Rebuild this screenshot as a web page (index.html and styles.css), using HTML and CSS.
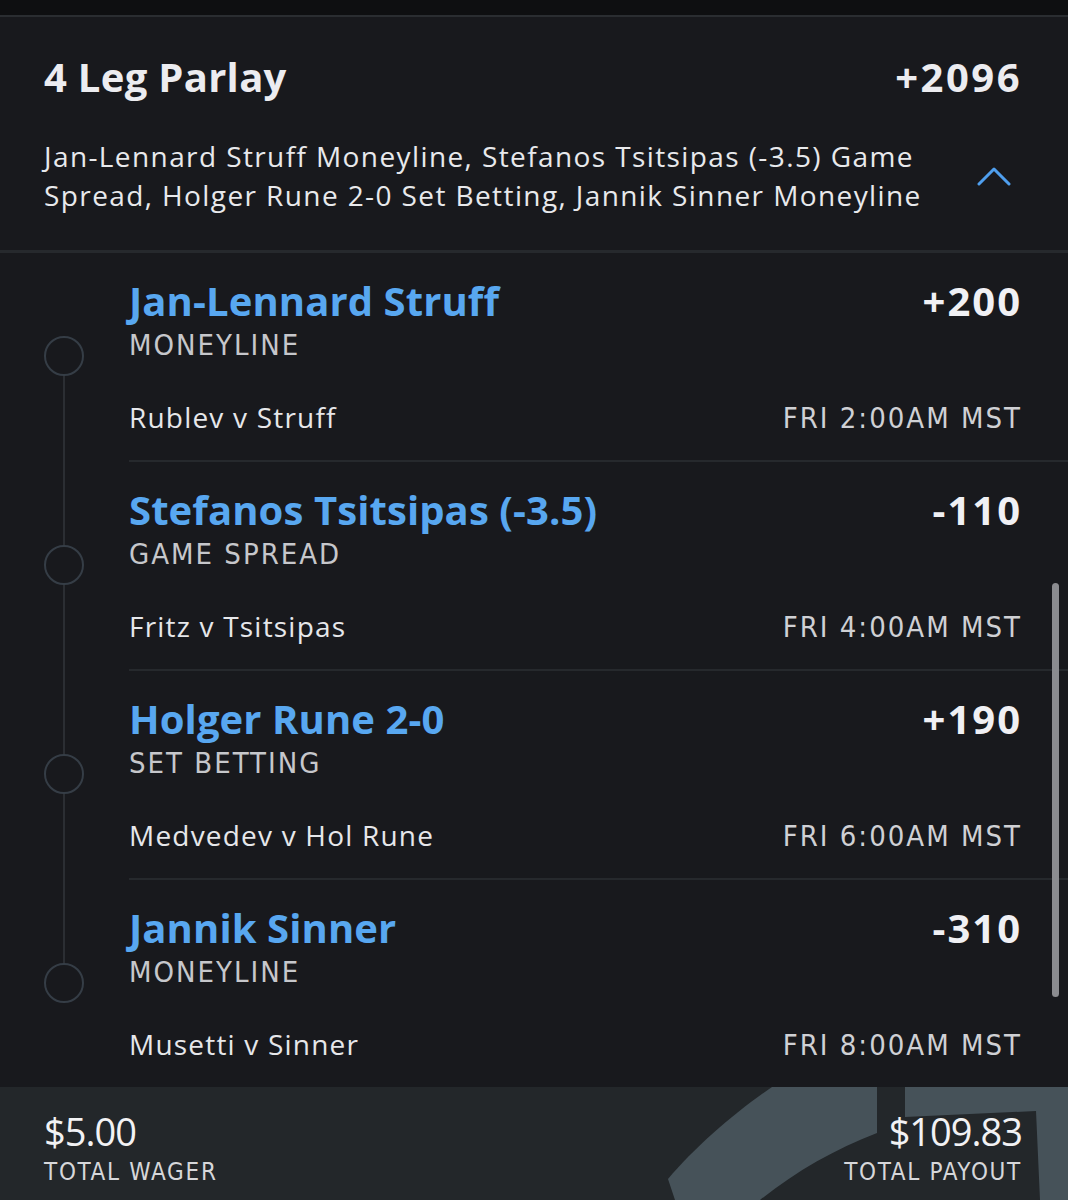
FILE: index.html
```html
<!DOCTYPE html>
<html lang="en">
<head>
<meta charset="utf-8">
<title>4 Leg Parlay</title>
<link rel="stylesheet" href="styles.css">
</head>
<body>
<div class="topbar"></div>
<header class="header">
  <div class="head-row">
    <h1 class="title">4 Leg Parlay</h1>
    <span class="total-odds">+2096</span>
  </div>
  <div class="desc-row">
    <p class="desc">Jan-Lennard Struff Moneyline, Stefanos Tsitsipas (-3.5) Game Spread, Holger Rune 2-0 Set Betting, Jannik Sinner Moneyline</p>
    <svg class="chevron" width="34" height="20" viewBox="0 0 34 20"><polyline points="2,18 17,3 32,18" fill="none" stroke="#4f9fee" stroke-width="3" stroke-linecap="round" stroke-linejoin="round"/></svg>
  </div>
</header>
<main class="legs">
  <section class="leg first">
    <div class="rail"><span class="seg top"></span><span class="dot"></span><span class="seg bottom"></span></div>
    <div class="leg-body">
      <div class="row"><span class="pick">Jan-Lennard Struff</span><span class="odds">+200</span></div>
      <div class="market">MONEYLINE</div>
      <div class="row match-row"><span class="match">Rublev v Struff</span><span class="time">FRI 2:00AM MST</span></div>
    </div>
  </section>
  <section class="leg">
    <div class="rail"><span class="seg top"></span><span class="dot"></span><span class="seg bottom"></span></div>
    <div class="leg-body">
      <div class="row"><span class="pick">Stefanos Tsitsipas (-3.5)</span><span class="odds">-110</span></div>
      <div class="market">GAME SPREAD</div>
      <div class="row match-row"><span class="match">Fritz v Tsitsipas</span><span class="time">FRI 4:00AM MST</span></div>
    </div>
  </section>
  <section class="leg">
    <div class="rail"><span class="seg top"></span><span class="dot"></span><span class="seg bottom"></span></div>
    <div class="leg-body">
      <div class="row"><span class="pick">Holger Rune 2-0</span><span class="odds">+190</span></div>
      <div class="market">SET BETTING</div>
      <div class="row match-row"><span class="match">Medvedev v Hol Rune</span><span class="time">FRI 6:00AM MST</span></div>
    </div>
  </section>
  <section class="leg last">
    <div class="rail"><span class="seg top"></span><span class="dot"></span><span class="seg bottom"></span></div>
    <div class="leg-body">
      <div class="row"><span class="pick">Jannik Sinner</span><span class="odds">-310</span></div>
      <div class="market">MONEYLINE</div>
      <div class="row match-row"><span class="match">Musetti v Sinner</span><span class="time">FRI 8:00AM MST</span></div>
    </div>
  </section>
  <div class="scrollbar"></div>
</main>
<footer class="footer">
  <svg class="crown" viewBox="0 0 1068 113" preserveAspectRatio="none">
    <path d="M772,0 C735,25 695,60 668,92 L675,113 L1068,113 L1068,0 Z" fill="#465259"/>
    <path d="M877,0 L905,0 L905,30 L1036,24 L1040,113 L760,113 C795,85 835,62 877,46 Z" fill="#23272a"/>
  </svg>
  <div class="amount">
    <span class="money">$5.00</span>
    <span class="label">TOTAL WAGER</span>
  </div>
  <div class="amount right">
    <span class="money">$109.83</span>
    <span class="label">TOTAL PAYOUT</span>
  </div>
</footer>
</body>
</html>
```
FILE: styles.css
```css
html, body {
  margin: 0;
  padding: 0;
}
body {
  width: 1068px;
  height: 1200px;
  overflow: hidden;
  background: #18191d;
  font-family: "Open Sans", "Liberation Sans", sans-serif;
  color: #e8e9ec;
}
.topbar {
  height: 15px;
  background: #0e0f11;
  border-bottom: 2px solid #2a2d31;
}
.header {
  padding: 36px 46px 35px 44px;
  border-bottom: 3px solid #26292d;
}
.head-row {
  display: flex;
  justify-content: space-between;
  align-items: baseline;
}
.title {
  margin: 0;
  font-size: 40px;
  line-height: 48px;
  font-weight: 700;
  color: #ececf0;
  letter-spacing: 0.3px;
}
.total-odds {
  font-size: 40px;
  line-height: 48px;
  font-weight: 700;
  color: #ececf0;
  letter-spacing: 2.5px;
}
.desc-row {
  display: flex;
  align-items: center;
  margin-top: 36px;
}
.desc {
  margin: 0;
  width: 912px;
  font-size: 28px;
  line-height: 39px;
  letter-spacing: 1.4px;
  color: #e8e9ec;
}
.chevron {
  margin-left: auto;
  margin-right: 11px;
  flex: none;
}
.legs {
  position: relative;
}
.leg {
  display: grid;
  grid-template-columns: 129px 1fr;
}
.rail {
  display: flex;
  flex-direction: column;
  align-items: flex-start;
}
.seg {
  display: block;
  width: 2px;
  margin-left: 63px;
  background: #2b2e33;
}
.seg.top {
  height: 83px;
}
.seg.bottom {
  flex: 1;
}
.first .seg.top,
.last .seg.bottom {
  background: transparent;
}
.dot {
  display: block;
  box-sizing: border-box;
  width: 40px;
  height: 40px;
  margin-left: 44px;
  border: 2px solid #353d46;
  border-radius: 50%;
}
.leg-body {
  padding: 24px 46px 22px 0;
  border-bottom: 2px solid #26292d;
}
.last .leg-body {
  border-bottom: none;
}
.row {
  display: flex;
  justify-content: space-between;
  align-items: baseline;
}
.pick {
  font-size: 40px;
  line-height: 48px;
  font-weight: 700;
  color: #58a7f0;
  letter-spacing: 0.1px;
}
.odds {
  font-size: 40px;
  line-height: 48px;
  font-weight: 700;
  color: #f0f0f4;
  letter-spacing: 2px;
}
.market {
  margin-top: 3px;
  font-family: "DejaVu Sans", "Liberation Sans", sans-serif;
  font-stretch: condensed;
  font-size: 29px;
  line-height: 34px;
  letter-spacing: 2px;
  color: #c6c7cb;
}
.match-row {
  margin-top: 36px;
}
.match {
  font-size: 28px;
  line-height: 39px;
  letter-spacing: 1.2px;
  color: #e6e7ea;
}
.time {
  font-family: "DejaVu Sans", "Liberation Sans", sans-serif;
  font-stretch: condensed;
  font-size: 29px;
  line-height: 39px;
  letter-spacing: 2px;
  color: #cfd0d4;
}
.scrollbar {
  position: absolute;
  top: 330px;
  right: 9px;
  width: 7px;
  height: 414px;
  border-radius: 4px;
  background: #8b8c90;
}
.footer {
  position: relative;
  height: 113px;
  box-sizing: border-box;
  padding: 22px 46px 0 44px;
  background: #23272a;
  display: flex;
  justify-content: space-between;
  align-items: flex-start;
}
.crown {
  position: absolute;
  left: 0;
  top: 0;
  width: 1068px;
  height: 113px;
}
.amount {
  position: relative;
  display: flex;
  flex-direction: column;
  align-items: flex-start;
}
.amount.right {
  align-items: flex-end;
}
.money {
  font-size: 38px;
  line-height: 44px;
  font-weight: 400;
  color: #f2f2f4;
  letter-spacing: -1px;
}
.label {
  margin-top: 5px;
  font-family: "DejaVu Sans", "Liberation Sans", sans-serif;
  font-stretch: condensed;
  font-size: 24px;
  line-height: 28px;
  letter-spacing: 1.7px;
  color: #d6d7da;
}
```
